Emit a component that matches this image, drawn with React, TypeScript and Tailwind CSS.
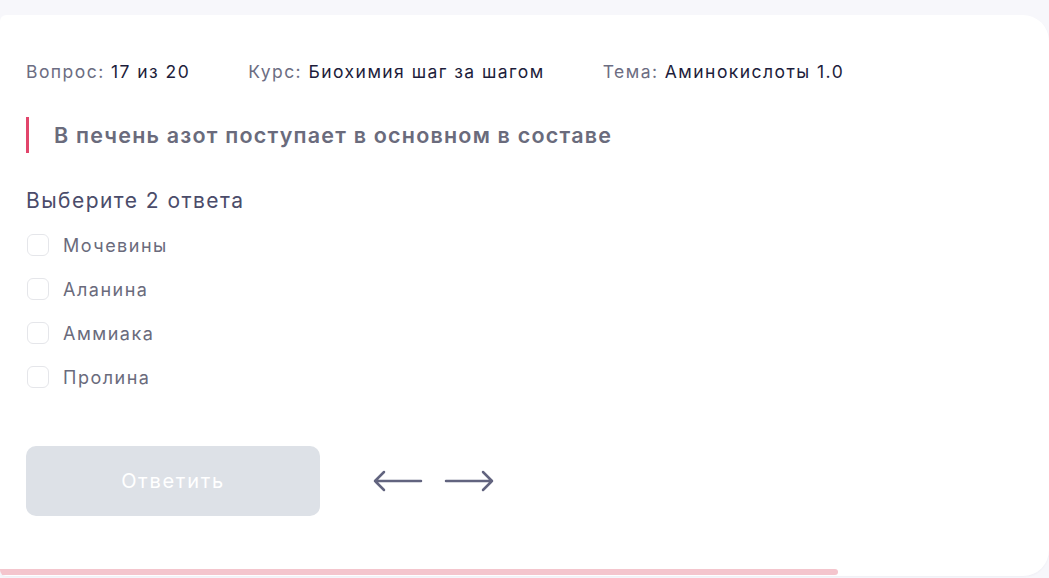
const options = ['Мочевины', 'Аланина', 'Аммиака', 'Пролина'];

const meta = [
	{ label: 'Вопрос:', value: '17 из 20' },
	{ label: 'Курс:', value: 'Биохимия шаг за шагом' },
	{ label: 'Тема:', value: 'Аминокислоты 1.0' },
];

const Arrow = ({ dir }: { dir: 'left' | 'right' }) => (
	<svg width="50" height="22" viewBox="0 0 50 22" fill="none" stroke="#62647f" strokeWidth="2.5" strokeLinecap="round" strokeLinejoin="round">
		{dir === 'left' ? (
			<path d="M48 11H2M11 2L2 11L11 20" />
		) : (
			<path d="M2 11H48M39 2L48 11L39 20" />
		)}
	</svg>
);

const App = () => {
	return (
		<div className="w-[1049px] h-[578px] overflow-hidden bg-[#f7f7fb] pt-[15px] font-['Inter',sans-serif]">
			<div className="flex flex-col h-[561px] bg-white rounded-r-[26px] rounded-l-[6px] overflow-hidden shadow-[0_1px_2px_rgba(40,40,90,0.04)]">
				<div className="pl-[26px] pt-[45px]">
					<div className="flex gap-[58px] h-6 items-center text-[17.5px] tracking-[1.45px]">
						{meta.map((m) => (
							<span key={m.label}>
								<span className="text-[#6c6d82]">{m.label} </span>
								<span className="text-[#1d1d3b]">{m.value}</span>
							</span>
						))}
					</div>

					<div className="mt-[33px] flex items-center h-9 border-l-[3px] border-[#e2456b] pl-[25px]">
						<h2 className="text-[21.5px] font-semibold tracking-[1.2px] text-[#6a6b7c]">
							В печень азот поступает в основном в составе
						</h2>
					</div>

					<p className="mt-[34px] h-7 flex items-center text-[21px] tracking-[1.45px] text-[#4b4c6a]">
						Выберите 2 ответа
					</p>

					<div className="mt-2 flex flex-col">
						{options.map((o) => (
							<label key={o} className="flex items-center h-11 gap-[14px] cursor-pointer">
								<span className="ml-px w-[22px] h-[22px] rounded-[6px] border-[1.5px] border-[#e5e6ea] bg-white" />
								<span className="text-[18px] tracking-[1.5px] text-[#6a6b7c]">{o}</span>
							</label>
						))}
					</div>

					<div className="mt-[47px] flex items-center">
						<button className="w-[294px] h-[70px] rounded-[10px] bg-[#dde1e7] text-white text-[20px] tracking-[1.7px]">
							Ответить
						</button>
						<div className="ml-[53px] flex items-center gap-[21px]">
							<Arrow dir="left" />
							<Arrow dir="right" />
						</div>
					</div>
				</div>

				<div className="mt-auto mb-px h-[6px] w-[838px] bg-[#f4c5cd] rounded-r-full" />
			</div>
		</div>
	);
};

export default App;
